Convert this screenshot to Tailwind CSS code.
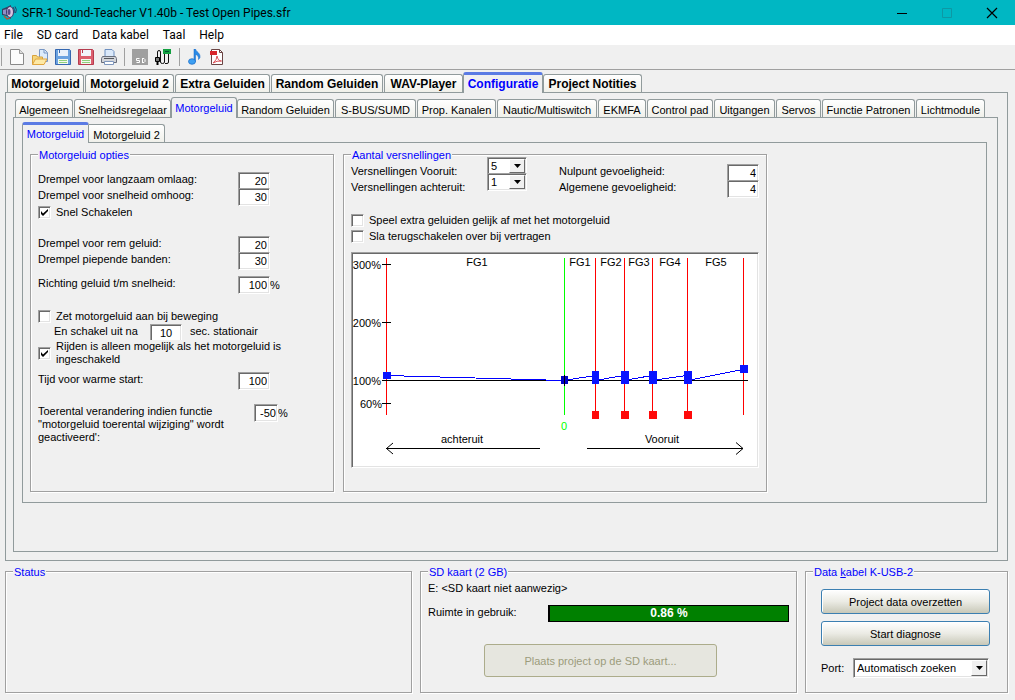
<!DOCTYPE html>
<html lang="nl">
<head>
    <meta charset="UTF-8">
    <meta name="viewport" content="width=device-width, initial-scale=1.0">
    <title>SFR-1 Sound-Teacher V1.40b - Test Open Pipes.sfr</title>
    <script src="https://cdn.jsdelivr.net/npm/@tailwindcss/browser@4"></script>
</head>
<body class="bg-[#f0f0f0] text-black min-h-screen flex flex-col font-['Liberation_Sans',Arial,sans-serif] text-[11px] leading-4">

    <!-- title bar -->
    <header class="flex items-center h-[25px] bg-[#00b7c3] font-[Roboto,sans-serif] text-xs">
        <svg class="w-5 h-5 ml-px mr-px" viewBox="0 0 20 20" fill="none">
            <path d="M1 6l5-2 4-2v14l-4-3-5-1z" fill="#34405f"/>
            <path d="M2 7l4-1v6l-4-1z" fill="#8f8fc8"/>
            <ellipse cx="9" cy="9" rx="3.500" ry="5.500" fill="#d9c3df" stroke="#3a3768"/>
            <ellipse cx="8" cy="9" rx="1.500" ry="3" fill="#5a4a8a"/>
            <path d="M3 13l3 3 3-1" stroke="#b0523c" stroke-width="1.500"/>
            <path d="M12 4q2 2 1 6M14 3.500q2.500 3 .5 6.500" stroke="#2b3b66"/>
        </svg>
        <h1 class="flex-1">SFR-1 Sound-Teacher V1.40b - Test Open Pipes.sfr</h1>
        <button class="w-[45px] h-full grid place-items-center" aria-label="Minimaliseren">
            <svg class="w-3 h-3" viewBox="0 0 12 12"><path d="M1 6.500h10" stroke="#000"/></svg>
        </button>
        <button class="w-[45px] h-full grid place-items-center" aria-label="Maximaliseren" disabled>
            <svg class="w-3 h-3" viewBox="0 0 12 12" fill="none"><path d="M1.500 1.500h9v9h-9z" stroke="#0d98a4"/></svg>
        </button>
        <button class="w-[46px] h-full grid place-items-center" aria-label="Sluiten">
            <svg class="w-3 h-3" viewBox="0 0 12 12"><path d="M1 1l10 10M11 1L1 11" stroke="#000" stroke-width="1.200"/></svg>
        </button>
    </header>

    <!-- menu -->
    <nav class="flex items-center gap-3.5 h-5 pl-1 bg-white font-[Roboto,sans-serif] text-xs">
        <a href="#">File</a>
        <a href="#">SD card</a>
        <a href="#">Data kabel</a>
        <a href="#">Taal</a>
        <a href="#">Help</a>
    </nav>

    <!-- toolbar -->
    <div class="flex items-center h-[25px] pl-px border-b border-[#a0a0a0]">
        <div class="w-px h-[18px] bg-[#a0a0a0] mr-[7px]"></div>
        <button class="w-[23px] flex" aria-label="Nieuw">
            <svg class="w-4 h-4" viewBox="0 0 16 16"><path d="M1.500.500h9l4 4v11h-13z" fill="#fcfcfc" stroke="#8a8a8a"/><path d="M10.500.500v4h4" fill="#ddd" stroke="#9a9a9a"/></svg>
        </button>
        <button class="w-[23px] flex" aria-label="Openen">
            <svg class="w-4 h-4" viewBox="0 0 16 16"><path d="M7.500.500h5l3 3v9h-8z" fill="#dcebfb" stroke="#7796c4"/><path d="M12 1v3h3" fill="none" stroke="#7796c4"/><path d="M.500 15.500v-9h4l1 1.500h5v2" fill="#f5d67c" stroke="#d8a23c"/><path d="M.500 15.500l3-5.500h11.500l-3 5.500z" fill="#fde9a6" stroke="#e0a540"/></svg>
        </button>
        <button class="w-[23px] flex" aria-label="Opslaan">
            <svg class="w-4 h-4" viewBox="0 0 16 16"><path d="M.500.500h14l1 1v14h-15z" fill="#6aa2e0" stroke="#3567b0"/><path d="M3 1h10v6H3z" fill="#e8f1fb"/><path d="M4.500 1v3" stroke="#3567b0"/><path d="M3 10h10v5H3z" fill="#f4f8f0"/><path d="M4 11.500h8M4 13.500h8" stroke="#8fd07c"/></svg>
        </button>
        <button class="w-[23px] flex" aria-label="Opslaan als">
            <svg class="w-4 h-4" viewBox="0 0 16 16"><path d="M.500.500h14l1 1v14h-15z" fill="#dc5f6e" stroke="#b53c4e"/><path d="M3 1h10v6H3z" fill="#f2f5fb"/><path d="M4.500 1v3" stroke="#b53c4e"/><path d="M3 10h10v5H3z" fill="#f4f8f0"/><path d="M4 11.500h8M4 13.500h8" stroke="#8fd07c"/></svg>
        </button>
        <button class="w-[23px] flex" aria-label="Afdrukken">
            <svg class="w-4 h-4" viewBox="0 0 16 16"><path d="M4 .500h7l2 2v5H4z" fill="#dbe9fa" stroke="#6d8fc0"/><path d="M1.500 7.500h13l1 2v4h-15v-4z" fill="#d3d5da" stroke="#6a6f7c"/><path d="M3 9.500h10" stroke="#55595f"/><path d="M3.500 12.500h9v3h-9z" fill="#fff" stroke="#7f97bd"/></svg>
        </button>
        <div class="w-px h-[18px] bg-[#a0a0a0] mr-[7px]"></div>
        <button class="w-[23px] flex" aria-label="SD kaart" disabled>
            <svg class="w-4 h-4" viewBox="0 0 16 16" fill="none"><path d="M0 0h16v16H0z" fill="#a0a0a0"/><path d="M7.500 9.500h-3v2h3v2h-3M10.500 9v5M10.500 9.500h1.500l1 1v2l-1 1h-1.500" stroke="#fff"/></svg>
        </button>
        <button class="w-6 flex" aria-label="Data kabel">
            <svg class="w-4 h-4" viewBox="0 0 16 16" fill="none"><path d="M2.500 8V3q0-1.500 1.500-1.500T5.500 3v10q0 1.500 2 1.500t2-1.500V4.500M9.500 4.500h4V13q0 1.500-1.500 1.500h-2" fill="#f0f0f0" stroke="#111"/><path d="M8 0h8v5H8z" fill="#12a040"/><path d="M10 2.500h4" stroke="#053"/><path d="M.500 8.500h4v4h-4z" fill="#777" stroke="#000"/><path d="M2.500 13v3" stroke="#000" stroke-width="2"/></svg>
        </button>
        <div class="w-px h-[18px] bg-[#a0a0a0] mr-[7px]"></div>
        <button class="w-[23px] flex" aria-label="Geluid">
            <svg class="w-4 h-4" viewBox="0 0 16 16"><path d="M7 0h1.500c.5 3 5 3.500 4.500 8.500-.500 1-1 1.500-1.500 2 .5-3-1-4.500-3-5v7H7z" fill="#2a8ae6" stroke="#1567c4" stroke-width=".5"/><ellipse cx="5" cy="12.500" rx="3.500" ry="2.800" fill="#3ea0f2" stroke="#1567c4" stroke-width=".7"/></svg>
        </button>
        <button class="w-[23px] flex" aria-label="PDF">
            <svg class="w-4 h-4" viewBox="0 0 16 16" fill="none"><path d="M1.500.500h8l3 3v12h-11z" fill="#fff" stroke="#6a4444"/><path d="M9.500.500v3h3" stroke="#6a4444"/><path d="M0 2h7v4H0z" fill="#d8262c"/><path d="M3 14q4-3 4-7 1 5 4.500 5-4.500-.5-8.500 2z" stroke="#dc5058"/></svg>
        </button>
    </div>

    <main class="flex-1 flex flex-col pl-[5px] pr-[7px] pb-[7px]">

        <!-- main tabs -->
        <div role="tablist" class="flex items-end gap-px h-[22px] pl-0.5 text-xs font-bold whitespace-nowrap">
            <button role="tab" class="w-[77px] h-[18px] border border-b-0 border-[#919b9c] rounded-t-[3px] bg-linear-to-b from-white to-[#f0f0ea]">Motorgeluid</button>
            <button role="tab" class="w-[89px] h-[18px] border border-b-0 border-[#919b9c] rounded-t-[3px] bg-linear-to-b from-white to-[#f0f0ea]">Motorgeluid 2</button>
            <button role="tab" class="w-[95px] h-[18px] border border-b-0 border-[#919b9c] rounded-t-[3px] bg-linear-to-b from-white to-[#f0f0ea]">Extra Geluiden</button>
            <button role="tab" class="w-[112px] h-[18px] border border-b-0 border-[#919b9c] rounded-t-[3px] bg-linear-to-b from-white to-[#f0f0ea]">Random Geluiden</button>
            <button role="tab" class="w-[79px] h-[18px] border border-b-0 border-[#919b9c] rounded-t-[3px] bg-linear-to-b from-white to-[#f0f0ea]">WAV-Player</button>
            <button role="tab" aria-selected="true" class="relative w-20 h-[21px] -ml-px -mb-px border-x border-t-3 border-x-[#919b9c] border-t-[#5b7be4] rounded-t-[3px] bg-[#f0f0f0] text-[#0000ff]">Configuratie</button>
            <button role="tab" class="w-[99px] h-[18px] -ml-px border border-b-0 border-[#919b9c] rounded-t-[3px] bg-linear-to-b from-white to-[#f0f0ea]">Project Notities</button>
        </div>

        <section class="flex-1 flex flex-col border border-[#919b9c] pl-[7px] pr-[9px] pb-2">

            <!-- configuration tabs -->
            <div role="tablist" class="flex items-end gap-px h-6 pl-0.5 whitespace-nowrap">
                <button role="tab" class="w-[58px] h-[18px] pt-0.5 border border-b-0 border-[#919b9c] rounded-t-[3px] bg-linear-to-b from-white to-[#f0f0ea]">Algemeen</button>
                <button role="tab" class="w-[97px] h-[18px] pt-0.5 border border-b-0 border-[#919b9c] rounded-t-[3px] bg-linear-to-b from-white to-[#f0f0ea]">Snelheidsregelaar</button>
                <button role="tab" aria-selected="true" class="relative w-[66px] h-[21px] -ml-px -mb-px border border-b-0 border-[#919b9c] rounded-t-[3px] bg-[#f0f0f0] text-[#0000ff]">Motorgeluid</button>
                <button role="tab" class="w-[97px] h-[18px] pt-0.5 -ml-px border border-b-0 border-[#919b9c] rounded-t-[3px] bg-linear-to-b from-white to-[#f0f0ea]">Random Geluiden</button>
                <button role="tab" class="w-[81px] h-[18px] pt-0.5 border border-b-0 border-[#919b9c] rounded-t-[3px] bg-linear-to-b from-white to-[#f0f0ea]">S-BUS/SUMD</button>
                <button role="tab" class="w-[79px] h-[18px] pt-0.5 border border-b-0 border-[#919b9c] rounded-t-[3px] bg-linear-to-b from-white to-[#f0f0ea]">Prop. Kanalen</button>
                <button role="tab" class="w-[100px] h-[18px] pt-0.5 border border-b-0 border-[#919b9c] rounded-t-[3px] bg-linear-to-b from-white to-[#f0f0ea]">Nautic/Multiswitch</button>
                <button role="tab" class="w-12 h-[18px] pt-0.5 border border-b-0 border-[#919b9c] rounded-t-[3px] bg-linear-to-b from-white to-[#f0f0ea]">EKMFA</button>
                <button role="tab" class="w-[66px] h-[18px] pt-0.5 border border-b-0 border-[#919b9c] rounded-t-[3px] bg-linear-to-b from-white to-[#f0f0ea]">Control pad</button>
                <button role="tab" class="w-[61px] h-[18px] pt-0.5 border border-b-0 border-[#919b9c] rounded-t-[3px] bg-linear-to-b from-white to-[#f0f0ea]">Uitgangen</button>
                <button role="tab" class="w-[45px] h-[18px] pt-0.5 border border-b-0 border-[#919b9c] rounded-t-[3px] bg-linear-to-b from-white to-[#f0f0ea]">Servos</button>
                <button role="tab" class="w-[93px] h-[18px] pt-0.5 border border-b-0 border-[#919b9c] rounded-t-[3px] bg-linear-to-b from-white to-[#f0f0ea]">Functie Patronen</button>
                <button role="tab" class="w-[69px] h-[18px] pt-0.5 border border-b-0 border-[#919b9c] rounded-t-[3px] bg-linear-to-b from-white to-[#f0f0ea]">Lichtmodule</button>
            </div>

            <section class="flex-1 flex flex-col border border-[#919b9c] pl-2 pr-2.5 pb-12">

                <!-- engine tabs -->
                <div role="tablist" class="flex items-end h-6 whitespace-nowrap">
                    <button role="tab" aria-selected="true" class="relative w-[67px] h-[21px] -mb-px border-x border-t-3 border-x-[#919b9c] border-t-[#5b7be4] rounded-t-[3px] bg-[#f0f0f0] text-[#0000ff]">Motorgeluid</button>
                    <button role="tab" class="w-[76px] h-[18px] pt-0.5 border border-b-0 border-l-0 border-[#919b9c] rounded-tr-[3px] bg-linear-to-b from-white to-[#f0f0ea]">Motorgeluid 2</button>
                </div>

                <section class="flex-1 flex gap-[9px] border border-[#919b9c] pl-[7px] pt-[5px] pb-2.5">

                    <fieldset class="w-[304px] border border-[#a0a0a0] px-[7px] pt-[11px] shadow-[1px_1px_0_#fff,inset_1px_1px_0_#fff]">
                        <legend class="px-px pt-px leading-3 bg-[#f0f0f0] text-[#0000ff]">Motorgeluid opties</legend>
                        <div class="flex h-4">
                            <label for="langzaam" class="w-[200px] leading-3.5">Drempel voor langzaam omlaag:</label>
                            <input id="langzaam" value="20" class="w-8 h-[18px] pr-0.5 bg-white text-right border border-[#a0a0a0] border-b-white border-r-white shadow-[inset_1px_1px_0_#696969,inset_-1px_-1px_0_#e3e3e3]">
                        </div>
                        <div class="flex h-4">
                            <label for="snelheid" class="w-[200px] leading-3.5">Drempel voor snelheid omhoog:</label>
                            <input id="snelheid" value="30" class="w-8 h-[18px] pr-0.5 bg-white text-right border border-[#a0a0a0] border-b-white border-r-white shadow-[inset_1px_1px_0_#696969,inset_-1px_-1px_0_#e3e3e3]">
                        </div>
                        <label class="flex items-center gap-[5px] h-4">
                            <span class="grid place-items-center">
                                <input type="checkbox" checked class="peer appearance-none col-start-1 row-start-1 w-[13px] h-[13px] bg-white border border-[#a0a0a0] border-b-white border-r-white shadow-[inset_1px_1px_0_#696969,inset_-1px_-1px_0_#e3e3e3]">
                                <svg class="col-start-1 row-start-1 w-[7px] h-[7px] hidden peer-checked:block pointer-events-none" viewBox="0 0 7 7"><path d="M0 2v3l2 2 5-5V0L2 4.500z"/></svg>
                            </span>
                            Snel Schakelen
                        </label>
                        <div class="flex h-4 mt-4">
                            <label for="rem" class="w-[200px] leading-3.5">Drempel voor rem geluid:</label>
                            <input id="rem" value="20" class="w-8 h-[18px] pr-0.5 bg-white text-right border border-[#a0a0a0] border-b-white border-r-white shadow-[inset_1px_1px_0_#696969,inset_-1px_-1px_0_#e3e3e3]">
                        </div>
                        <div class="flex h-4">
                            <label for="banden" class="w-[200px] leading-3.5">Drempel piepende banden:</label>
                            <input id="banden" value="30" class="w-8 h-[18px] pr-0.5 bg-white text-right border border-[#a0a0a0] border-b-white border-r-white shadow-[inset_1px_1px_0_#696969,inset_-1px_-1px_0_#e3e3e3]">
                        </div>
                        <div class="flex h-4 mt-2">
                            <label for="richting" class="w-[200px] leading-3.5">Richting geluid t/m snelheid:</label>
                            <input id="richting" value="100" class="w-8 h-[18px] pr-0.5 bg-white text-right border border-[#a0a0a0] border-b-white border-r-white shadow-[inset_1px_1px_0_#696969,inset_-1px_-1px_0_#e3e3e3]">
                            <span class="leading-[18px]">%</span>
                        </div>
                        <label class="flex items-center gap-[5px] h-4 mt-4">
                            <input type="checkbox" class="appearance-none w-[13px] h-[13px] bg-white border border-[#a0a0a0] border-b-white border-r-white shadow-[inset_1px_1px_0_#696969,inset_-1px_-1px_0_#e3e3e3]">
                            Zet motorgeluid aan bij beweging
                        </label>
                        <div class="flex h-4 pl-4">
                            <label for="stationair" class="w-24 leading-3.5">En schakel uit na</label>
                            <input id="stationair" value="10" class="w-8 h-[18px] mr-2 bg-white text-center border border-[#a0a0a0] border-b-white border-r-white shadow-[inset_1px_1px_0_#696969,inset_-1px_-1px_0_#e3e3e3]">
                            <span class="leading-3.5">sec. stationair</span>
                        </div>
                        <label class="relative flex items-center gap-[5px] leading-[13px]">
                            <span class="grid place-items-center">
                                <input type="checkbox" checked class="peer appearance-none col-start-1 row-start-1 w-[13px] h-[13px] bg-white border border-[#a0a0a0] border-b-white border-r-white shadow-[inset_1px_1px_0_#696969,inset_-1px_-1px_0_#e3e3e3]">
                                <svg class="col-start-1 row-start-1 w-[7px] h-[7px] hidden peer-checked:block pointer-events-none" viewBox="0 0 7 7"><path d="M0 2v3l2 2 5-5V0L2 4.500z"/></svg>
                            </span>
                            <span class="bg-[#f0f0f0]">Rijden is alleen mogelijk als het motorgeluid is<br>ingeschakeld</span>
                        </label>
                        <div class="flex h-4 mt-1.5">
                            <label for="warm" class="w-[200px] leading-3.5">Tijd voor warme start:</label>
                            <input id="warm" value="100" class="w-8 h-[18px] pr-0.5 bg-white text-right border border-[#a0a0a0] border-b-white border-r-white shadow-[inset_1px_1px_0_#696969,inset_-1px_-1px_0_#e3e3e3]">
                        </div>
                        <div class="flex items-start mt-4">
                            <label for="toerental" class="w-54 pt-px leading-[13px]">Toerental verandering indien functie<br>"motorgeluid toerental wijziging" wordt<br>geactiveerd':</label>
                            <input id="toerental" value="-50" class="w-6 h-[18px] pr-px bg-white text-right border border-[#a0a0a0] border-b-white border-r-white shadow-[inset_1px_1px_0_#696969,inset_-1px_-1px_0_#e3e3e3]">
                            <span class="leading-[18px]">%</span>
                        </div>
                    </fieldset>

                    <fieldset class="w-[424px] border border-[#a0a0a0] px-[7px] shadow-[1px_1px_0_#fff,inset_1px_1px_0_#fff]">
                        <legend class="px-px pt-px leading-3 bg-[#f0f0f0] text-[#0000ff]">Aantal versnellingen</legend>
                        <div class="flex h-[51px]">
                            <div class="flex flex-col w-34 pt-0.5">
                                <label for="vooruit">Versnellingen Vooruit:</label>
                                <label for="achteruit">Versnellingen achteruit:</label>
                            </div>
                            <div class="flex flex-col -mt-1 w-[72px]">
                                <div class="flex h-4">
                                    <div class="relative w-10 h-[18px] bg-white border border-[#a0a0a0] border-b-white border-r-white shadow-[inset_1px_1px_0_#696969,inset_-1px_-1px_0_#e3e3e3]">
                                        <select id="vooruit" class="appearance-none w-full h-full pl-[3px] block"><option>5</option><option>1</option></select>
                                        <span class="absolute right-px top-px w-4 h-3.5 grid place-items-center bg-[#f0f0f0] border border-white border-r-[#696969] border-b-[#696969] pointer-events-none"><svg class="w-[7px] h-1" viewBox="0 0 7 4"><path d="M0 0h7L3.500 4z"/></svg></span>
                                    </div>
                                </div>
                                <div class="flex h-4">
                                    <div class="relative w-10 h-[18px] bg-white border border-[#a0a0a0] border-b-white border-r-white shadow-[inset_1px_1px_0_#696969,inset_-1px_-1px_0_#e3e3e3]">
                                        <select id="achteruit" class="appearance-none w-full h-full pl-[3px] block"><option>1</option><option>2</option></select>
                                        <span class="absolute right-px top-px w-4 h-3.5 grid place-items-center bg-[#f0f0f0] border border-white border-r-[#696969] border-b-[#696969] pointer-events-none"><svg class="w-[7px] h-1" viewBox="0 0 7 4"><path d="M0 0h7L3.500 4z"/></svg></span>
                                    </div>
                                </div>
                            </div>
                            <div class="flex flex-col w-42 pt-0.5">
                                <label for="nulpunt">Nulpunt gevoeligheid:</label>
                                <label for="algemeen">Algemene gevoeligheid:</label>
                            </div>
                            <div class="flex flex-col pt-[3px]">
                                <div class="flex h-4"><input id="nulpunt" value="4" class="w-8 h-[18px] pr-0.5 bg-white text-right border border-[#a0a0a0] border-b-white border-r-white shadow-[inset_1px_1px_0_#696969,inset_-1px_-1px_0_#e3e3e3]"></div>
                                <div class="flex h-4"><input id="algemeen" value="4" class="w-8 h-[18px] pr-0.5 bg-white text-right border border-[#a0a0a0] border-b-white border-r-white shadow-[inset_1px_1px_0_#696969,inset_-1px_-1px_0_#e3e3e3]"></div>
                            </div>
                        </div>
                        <label class="flex items-center gap-[5px] h-4">
                            <input type="checkbox" class="appearance-none w-[13px] h-[13px] bg-white border border-[#a0a0a0] border-b-white border-r-white shadow-[inset_1px_1px_0_#696969,inset_-1px_-1px_0_#e3e3e3]">
                            Speel extra geluiden gelijk af met het motorgeluid
                        </label>
                        <label class="flex items-center gap-[5px] h-4">
                            <input type="checkbox" class="appearance-none w-[13px] h-[13px] bg-white border border-[#a0a0a0] border-b-white border-r-white shadow-[inset_1px_1px_0_#696969,inset_-1px_-1px_0_#e3e3e3]">
                            Sla terugschakelen over bij vertragen
                        </label>

                        <!-- gear curve -->
                        <div class="mt-2 w-[408px] h-[216px] bg-white border border-[#a0a0a0] border-b-white border-r-white shadow-[inset_1px_1px_0_#696969,inset_-1px_-1px_0_#e3e3e3]">
                            <svg class="w-full h-full block" viewBox="352 253 406 214" shape-rendering="crispEdges" fill="none">
                                <g stroke="#ff0000">
                                    <path d="M386.500 258v157M595.500 258v157M624.500 258v157M652.500 258v157M687.500 258v157M743.500 258v157"/>
                                </g>
                                <path d="M564.500 258v157" stroke="#00ff00"/>
                                <path d="M382 264.500h9M382 322.500h9M382 403.500h9M382 380.500h366" stroke="#000"/>
                                <path d="M386 375.500L564 380.500L595 375.500M595 380.500L624 375.500M624 380.500L652 375.500M652 380.500L687 375.500M687 380.500L743 369.500" stroke="#0000ff"/>
                                <g fill="#0a14ff">
                                    <path d="M383 372h8v7h-8zM592 371h7v13h-7zM621 371h8v13h-8zM649 371h8v13h-8zM684 371h8v13h-8zM740 365h8v8h-8z"/>
                                </g>
                                <path d="M561 376h7v8h-7z" fill="#0000c8"/>
                                <path d="M564.500 375v11" stroke="#000"/>
                                <path d="M592 411h7v8h-7zM621 411h8v8h-8zM649 411h8v8h-8zM684 411h8v8h-8z" fill="#ff0a0a"/>
                                <path d="M386 448.500h154M587 448.500h156" stroke="#000"/>
                                <path d="M393 443l-6.500 5.500 6.500 5.500M736 442.500l7 6-7 6" stroke="#000" shape-rendering="auto"/>
                                <g fill="#000" font-size="11">
                                    <text x="381" y="269" text-anchor="end">300%</text>
                                    <text x="381" y="327" text-anchor="end">200%</text>
                                    <text x="381" y="385" text-anchor="end">100%</text>
                                    <text x="382" y="408" text-anchor="end">60%</text>
                                    <text x="477" y="266" text-anchor="middle">FG1</text>
                                    <text x="580" y="266" text-anchor="middle">FG1</text>
                                    <text x="611" y="266" text-anchor="middle">FG2</text>
                                    <text x="639" y="266" text-anchor="middle">FG3</text>
                                    <text x="670" y="266" text-anchor="middle">FG4</text>
                                    <text x="716" y="266" text-anchor="middle">FG5</text>
                                    <text x="462" y="443" text-anchor="middle">achteruit</text>
                                    <text x="662" y="443" text-anchor="middle">Vooruit</text>
                                    <text x="564" y="430" text-anchor="middle" fill="#00ff00">0</text>
                                </g>
                            </svg>
                        </div>
                    </fieldset>
                </section>
            </section>
        </section>

        <!-- bottom row -->
        <div class="flex gap-2 mt-1 h-[128px]">
            <fieldset class="flex-1 border border-[#a0a0a0] px-[7px] shadow-[1px_1px_0_#fff,inset_1px_1px_0_#fff]">
                <legend class="px-px pt-px leading-3 bg-[#f0f0f0] text-[#0000ff]">Status</legend>
            </fieldset>

            <fieldset class="w-[375px] border border-[#a0a0a0] px-[7px] shadow-[1px_1px_0_#fff,inset_1px_1px_0_#fff]">
                <legend class="px-px pt-px leading-3 bg-[#f0f0f0] text-[#0000ff]">SD kaart (2 GB)</legend>
                <p class="pt-0.5">E: &lt;SD kaart niet aanwezig&gt;</p>
                <div class="flex mt-2">
                    <span id="ruimte" class="w-30">Ruimte in gebruik:</span>
                    <div role="progressbar" aria-labelledby="ruimte" aria-valuenow="0.86" class="w-[241px] h-[17px] mt-px border border-l-2 border-black bg-[#008000] text-center text-xs leading-[15px] font-bold text-white">0.86 %</div>
                </div>
                <button disabled class="block w-[233px] h-[33px] mt-[22px] ml-14 border border-[#acac8b] rounded-[3px] bg-[#e6e6df] text-[#9c9c7c]">Plaats project op de SD kaart...</button>
            </fieldset>

            <fieldset class="w-[203px] border border-[#a0a0a0] px-[15px] pt-[11px] shadow-[1px_1px_0_#fff,inset_1px_1px_0_#fff]">
                <legend class="-ml-2 px-px pt-px leading-3 bg-[#f0f0f0] text-[#0000ff]">Data <u>k</u>abel K-USB-2</legend>
                <button class="block w-[169px] h-[25px] mb-[7px] border border-[#3c7fb1] rounded-[3px] bg-linear-to-b from-white via-[#ebebe4] to-[#c8c8b8] shadow-[inset_1px_1px_0_#fff]">Project data overzetten</button>
                <button class="block w-[169px] h-[25px] mb-3 border border-[#3c7fb1] rounded-[3px] bg-linear-to-b from-white via-[#ebebe4] to-[#c8c8b8] shadow-[inset_1px_1px_0_#fff]">Start diagnose</button>
                <div class="flex items-center">
                    <label for="port" class="w-8">Port:</label>
                    <div class="relative w-34 h-5 bg-white border border-[#a0a0a0] border-b-white border-r-white shadow-[inset_1px_1px_0_#696969,inset_-1px_-1px_0_#e3e3e3]">
                        <select id="port" class="appearance-none w-full h-full pl-[3px] block"><option>Automatisch zoeken</option></select>
                        <span class="absolute right-px top-px w-4 h-4 grid place-items-center bg-[#f0f0f0] border border-white border-r-[#696969] border-b-[#696969] pointer-events-none"><svg class="w-[7px] h-1" viewBox="0 0 7 4"><path d="M0 0h7L3.500 4z"/></svg></span>
                    </div>
                </div>
            </fieldset>
        </div>
    </main>
</body>
</html>
